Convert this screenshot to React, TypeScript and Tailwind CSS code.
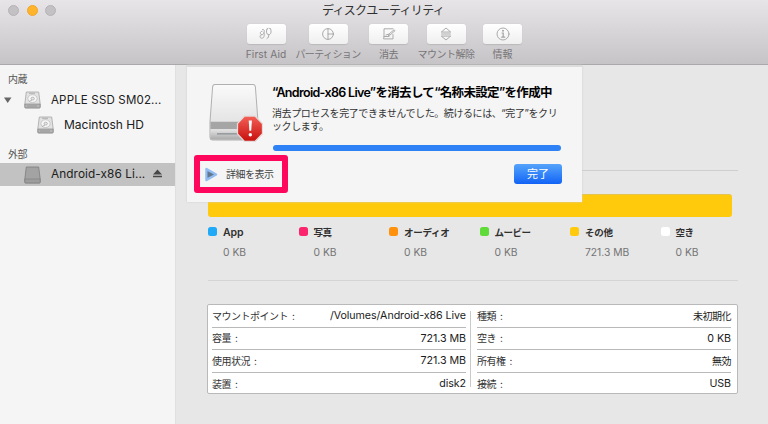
import React from "react";

const tools = [
  { label: "First Aid", box: "ml-[236px] w-[60px]", text: "tracking-[0.1px] text-[10.2px]", icon: "aid" },
  { label: "パーティション", box: "w-[64px]", text: "text-[10px] tracking-[-0.6px]", icon: "pie" },
  { label: "消去", box: "w-[57px]", text: "text-[10px] tracking-[-0.5px]", icon: "erase" },
  { label: "マウント解除", box: "w-[58px]", text: "text-[10px] tracking-[-0.5px]", icon: "mount" },
  { label: "情報", box: "w-[55px]", text: "text-[10px]", icon: "info" },
];

function ToolIcon({ name }: { name: string }) {
  return (
    <svg width="16" height="16" viewBox="0 0 16 16" fill="none" stroke="#a2a2a4" strokeWidth="0.9" strokeLinecap="round">
      {name === "aid" && (
        <path d="M3.600 8.700C1.500 8 2 5.200 4 5.300M4.500 3.500C6.500 3 6.500 5 6 6.200 5.500 8 5 8.800 3.600 8.700 1.500 9 1.500 12 3.500 12.200 6.500 12.400 6.300 9 6.300 7M9 3c-1.200 2.700-.5 5.500 1.500 5.700C13 8.900 13.700 5.500 12.600 3M9 3l1-.5M12.600 3l-1-.5M10.700 8.700c.3 2-.4 3-1.700 3.900" />
      )}
      {name === "pie" && (
        <>
          <circle cx="8" cy="8" r="5.400" />
          <path d="M8 2.500v11M8 8h5.300" />
        </>
      )}
      {name === "erase" && (
        <>
          <path d="M12 2.800H3v7.900l-.4 2.200h9.400V8.500M3 10.500h5" />
          <path d="M7.500 9.500l1-2 4.700-3.700.8.900-4.600 4zM5 9l3-1" />
        </>
      )}
      {name === "mount" && (
        <>
          <path d="M3.600 5.800L8 2l4.400 3.800zM3.600 10.300L8 14l4.400-3.700z" />
          <path d="M3.600 8h8.800" />
        </>
      )}
      {name === "info" && (
        <>
          <circle cx="8" cy="8" r="6" />
          <path d="M7 7h1.200v4M6.700 11.200h3" strokeWidth="1.200" />
          <circle cx="7.900" cy="4.800" r=".5" fill="#969698" />
        </>
      )}
    </svg>
  );
}

function Disk({ plain = false }: { plain?: boolean }) {
  return (
    <svg width="17" height="18" viewBox="0 0 17 18" className="shrink-0">
      <path d="M2.300 1h12.400l1.500 12v3.200q0 .8-.8.800H1.600q-.8 0-.8-.8V13z" fill={plain ? "#a3a3a3" : "#e2e2e2"} stroke={plain ? "#7c7c7c" : "#a5a5a5"} strokeWidth=".8" />
      <path d="M.9 13h15.200v3.200q0 .7-.8.700H1.700q-.8 0-.8-.7z" fill={plain ? "#9d9d9d" : "#b5b5b5"} stroke="#7d7d7d" strokeWidth=".6" />
      {!plain && (
        <>
          <ellipse cx="8.500" cy="7.600" rx="4.600" ry="3.900" fill="#f7f7f7" stroke="#b8b8b8" strokeWidth=".7" />
          <ellipse cx="8.700" cy="7.600" rx="1.700" ry="1.400" fill="#e5e5e5" stroke="#a5a5a5" strokeWidth=".7" />
          <path d="M5 2.300h6M5 10.500l3-1.500" stroke="#a5a5a5" strokeWidth=".8" />
          <path d="M3 15h10" stroke="#929292" strokeWidth=".8" />
        </>
      )}
    </svg>
  );
}

const legend = [
  { label: "App", value: "0 KB", color: "bg-[#20a9f7]", text: "text-[10.500px] tracking-[-0.1px]" },
  { label: "写真", value: "0 KB", color: "bg-[#fb246d]", text: "text-[9.500px] tracking-[-0.5px]" },
  { label: "オーディオ", value: "0 KB", color: "bg-[#ff910c]", text: "text-[9.500px] tracking-[-0.3px]" },
  { label: "ムービー", value: "0 KB", color: "bg-[#5edb36]", text: "text-[9.500px] tracking-[-0.5px]" },
  { label: "その他", value: "721.3 MB", color: "bg-[#ffca0b]", text: "text-[9.500px] tracking-[-0.3px]" },
  { label: "空き", value: "0 KB", color: "bg-white", text: "text-[9.500px] tracking-[-0.5px]" },
];

const left = [
  ["マウントポイント", "/Volumes/Android-x86 Live"],
  ["容量", "721.3 MB"],
  ["使用状況", "721.3 MB"],
  ["装置", "disk2"],
];
const right = [
  ["種類", "未初期化"],
  ["空き", "0 KB"],
  ["所有権", "無効"],
  ["接続", "USB"],
];

function Details({ rows }: { rows: string[][] }) {
  return (
    <div className="w-[254px] shrink-0">
      {rows.map(([k, v], i) => (
        <div key={k} className={`flex h-[22.5px] items-center justify-between pt-px ${i < 3 ? "border-b border-[#b9b9b9]" : ""}`}>
          <span className="flex items-center text-[10px] tracking-[-0.5px] text-[#333]">
            {k}
            <span className="ml-[4px] text-[10px]">:</span>
          </span>
          <span className={`text-[#1c1c1c] ${/[^\x00-\x7f]/.test(v) ? "text-[10px] tracking-[-0.5px]" : "text-[10.700px] tracking-[-0.07px]"}`}>{v}</span>
        </div>
      ))}
    </div>
  );
}

export default function App() {
  return (
    <div className="flex h-[424px] w-[768px] flex-col overflow-hidden whitespace-nowrap bg-[#e7e7e7] font-['Inter','Noto_Sans_CJK_JP',sans-serif] text-[#202020]">
      <header className="relative h-[65px] shrink-0 rounded-t-[4px] border-b border-[#aaa8aa] bg-linear-to-b from-[#e7e5e7] to-[#c6c4c6]">
        <div className="absolute left-[8px] top-[5px] flex gap-[7.500px]">
          <i className="size-[11px] rounded-full border border-[#b5b3b5] bg-[#c3c1c3]" />
          <i className="size-[11px] rounded-full border border-[#f3a52a] bg-[#ffb42b]" />
          <i className="size-[11px] rounded-full border border-[#b5b3b5] bg-[#c3c1c3]" />
        </div>
        <h1 className="h-[24px] pl-[322px] pt-[3px] text-[12px] leading-[16px] tracking-[-0.7px] text-[#303030]">ディスクユーティリティ</h1>
        <div className="flex">
          {tools.map((t) => (
            <div key={t.label} className={`flex shrink-0 flex-col items-center ${t.box}`}>
              <div className="flex h-[20px] w-[39px] items-center justify-center rounded-[3px] bg-linear-to-b from-white to-[#f0eff0] shadow-[0_0.5px_1px_#bbb]">
                <ToolIcon name={t.icon} />
              </div>
              <span className={`mt-[3px] leading-[14px] text-[#777578] ${t.text}`}>{t.label}</span>
            </div>
          ))}
        </div>
      </header>
      <div className="flex flex-1">
        <aside className="w-[176px] shrink-0 border-r border-[#e0e0e0] bg-[#f5f5f5]">
          <div className="h-[24px] pl-[8px] pt-[7px] text-[10px] leading-[15px] tracking-[-0.5px] text-[#555]">内蔵</div>
          <div className="flex h-[24px] items-center">
            <svg width="8" height="7" viewBox="0 0 8 7" className="-mt-[2px] ml-[4px]"><path d="M0 .5h7.500L3.700 6z" fill="#666" /></svg>
            <span className="-mt-[2px] ml-[12px] flex"><Disk /></span>
            <span className="ml-[10px] text-[11.500px] tracking-[0.18px]">APPLE SSD SM02...</span>
          </div>
          <div className="flex h-[24px] items-center pl-[37px]">
            <Disk />
            <span className="ml-[10px] text-[12px]">Macintosh HD</span>
          </div>
          <div className="h-[26px] pl-[8px] pt-[10px] text-[10px] leading-[15px] tracking-[-0.5px] text-[#555]">外部</div>
          <div className="flex h-[23px] items-center bg-[#c2c2c2] pl-[24px]">
            <Disk plain />
            <span className="ml-[10px] pt-px text-[11.800px] tracking-[0.08px]">Android-x86 Li...</span>
            <svg width="9" height="9" viewBox="0 0 9 9" className="-mt-[2px] ml-[8px]"><path d="M0 5.500L4.500.5 9 5.500zM0 6.800h9v1.500H0z" fill="#484848" /></svg>
          </div>
        </aside>
        <main className="relative flex-1 pl-[31px]">
          <div className="ml-px mt-[105px] h-px w-[530px] bg-[#cecece]" />
          <div className="ml-px mt-[23px] h-[23px] w-[524px] rounded-[3px] border-t border-[#e4c451] bg-[#ffca0b]" />
          <div className="ml-px mt-[9px] flex">
            {legend.map((l) => (
              <div key={l.label} className="flex w-[90.500px] shrink-0 gap-[6px]">
                <i className={`mt-px size-[9px] shrink-0 rounded-[2.500px] ${l.color}`} />
                <div>
                  <div className={`h-[18px] font-semibold leading-[14px] text-[#303030] ${l.text}`}>{l.label}</div>
                  <div className="h-[18px] text-[10.300px] leading-[16px] text-[#747474]">{l.value}</div>
                </div>
              </div>
            ))}
          </div>
          <div className="ml-px mt-[18px] h-px w-[530px] bg-[#d5d5d5]" />
          <div className="mt-[23px] flex h-[90px] w-[531px] rounded-[2px] border border-[#b9b9b9] bg-white pl-[4px]">
            <Details rows={left} />
            <div className="ml-[4px] mr-[6px] mt-[6px] h-[76px] w-px bg-[#c9c9c9]" />
            <Details rows={right} />
          </div>
          <section className="absolute left-[11px] top-0 h-[137px] w-[395px] border-t-2 border-[#dcdcdc] bg-[#f5f5f5] shadow-[0_0_2px_#ccc]">
            <div className="flex h-[87px]">
              <div className="ml-[22px] mt-[16px] h-[60px] w-[54px]">
                <svg width="54" height="61" viewBox="0 0 54 60" preserveAspectRatio="none">
                  <defs>
                    <linearGradient id="lid" x1="0" y1="0" x2="0" y2="1"><stop stopColor="#fafafa" /><stop offset="1" stopColor="#dadada" /></linearGradient>
                    <linearGradient id="base" x1="0" y1="0" x2="0" y2="1"><stop stopColor="#e5e5e5" /><stop offset="1" stopColor="#aaa" /></linearGradient>
                    <linearGradient id="stop" x1="0" y1="0" x2="0" y2="1"><stop stopColor="#f36057" /><stop offset="1" stopColor="#c70f0c" /></linearGradient>
                  </defs>
                  <path d="M6 1.500h38q2.200 0 2.400 2.500L49 38v15q0 3-3 3H4q-3 0-3-3V38L3.600 4q.2-2.500 2.400-2.500z" fill="url(#lid)" stroke="#b0b0b0" />
                  <path d="M1.500 38h47v7.500h-47z" fill="#a5a5a5" />
                  <path d="M1.500 45.500h47v7.500q0 2.500-2.500 2.500H4Q1.500 55.500 1.500 53z" fill="url(#base)" />
                  <path d="M8 50h24" stroke="#8d9395" strokeWidth="1.300" />
                  <path d="M35.500 32.500h10.500l7.500 7.500v10L46 57.500H35.500L28.500 50V40z" fill="url(#stop)" stroke="#e5dada" strokeWidth="1.300" />
                  <path d="M39.700 37h3.200l-.7 10h-1.800z" fill="#fff" />
                  <circle cx="41.300" cy="50.800" r="1.700" fill="#fff" />
                </svg>
              </div>
              <div className="ml-[9px] mt-[17px]">
                <h2 className="h-[22px] text-[12.500px] font-semibold leading-[18px] tracking-[-0.68px] text-black">“Android-x86 Live”を消去して“名称未設定”を作成中</h2>
                <p className="pt-px text-[10px] leading-[13px] tracking-[-0.41px] text-[#333]">消去プロセスを完了できませんでした。続けるには、“完了”をクリ<br />ックします。</p>
                <div className="ml-px mt-[12px] h-[6px] w-[288px] rounded-full bg-[#2e82f5]" />
              </div>
            </div>
            <div className="flex">
              <div className="ml-[7px] mt-px flex h-[38px] w-[94px] items-center rounded-[3px] border-[6px] border-[#ff075d]">
                <svg width="13" height="15" viewBox="0 0 13 15" className="ml-[5px]"><path d="M1.500 2l9.500 5.500L1.500 13z" fill="#79abe6" stroke="#93bdf2" strokeWidth="2.500" strokeLinejoin="round" /><path d="M2.500 4.200l6.500 3.300-6.500 3.300z" fill="#64788d" /></svg>
                <span className="ml-[8px] pt-px text-[10px] tracking-[-0.5px] text-[#444]">詳細を表示</span>
              </div>
              <button className="ml-[226px] mt-[10px] h-[20px] w-[48px] rounded-[3px] bg-linear-to-b from-[#55a3fb] to-[#1162f5] text-[11px] leading-[20px] text-white">完了</button>
            </div>
          </section>
        </main>
      </div>
    </div>
  );
}
